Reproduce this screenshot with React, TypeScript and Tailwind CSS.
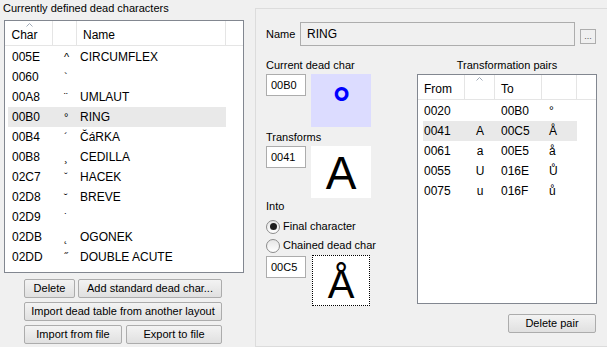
import type { ReactNode } from "react";

const deadChars = [
  { code: "005E", ch: "^", name: "CIRCUMFLEX" },
  { code: "0060", ch: "`", name: "" },
  { code: "00A8", ch: "¨", name: "UMLAUT" },
  { code: "00B0", ch: "°", name: "RING", selected: true },
  { code: "00B4", ch: "´", name: "ČáRKA" },
  { code: "00B8", ch: "¸", name: "CEDILLA" },
  { code: "02C7", ch: "ˇ", name: "HACEK" },
  { code: "02D8", ch: "˘", name: "BREVE" },
  { code: "02D9", ch: "˙", name: "" },
  { code: "02DB", ch: "˛", name: "OGONEK" },
  { code: "02DD", ch: "˝", name: "DOUBLE ACUTE" },
];

const pairs = [
  { from: "0020", fch: "", to: "00B0", tch: "°" },
  { from: "0041", fch: "A", to: "00C5", tch: "Å", selected: true },
  { from: "0061", fch: "a", to: "00E5", tch: "å" },
  { from: "0055", fch: "U", to: "016E", tch: "Ů" },
  { from: "0075", fch: "u", to: "016F", tch: "ů" },
];

function SortArrow({ className = "" }: { className?: string }) {
  return (
    <svg width="7" height="4" viewBox="0 0 7 4" className={`absolute top-[2px] ${className}`}>
      <path d="M0.5 3.5L3.5 0.5L6.5 3.5" fill="none" stroke="#a0aab8" strokeWidth="1" />
    </svg>
  );
}

function Btn({ children, className = "" }: { children: ReactNode; className?: string }) {
  return (
    <button
      className={`flex h-[19px] items-center justify-center rounded-[2px] border border-[#acacac] bg-gradient-to-b from-[#f3f3f3] to-[#e0e0e0] text-[11px] text-black ${className}`}
    >
      {children}
    </button>
  );
}

function CodeBox({ value }: { value: string }) {
  return (
    <div className="flex h-[22px] w-[40px] items-center border border-[#acacac] bg-white pl-[4px] text-[11px]">
      {value}
    </div>
  );
}

function Radio({ checked, label }: { checked?: boolean; label: string }) {
  return (
    <div className="flex h-[19px] items-center gap-[3px]">
      <div className="flex h-[14px] w-[14px] items-center justify-center rounded-full border border-[#8c8c8c] bg-gradient-to-b from-[#e6e6e6] to-[#ffffff]">
        {checked && <div className="h-[7px] w-[7px] rounded-full bg-[#1d1d1d]" />}
      </div>
      <span className="text-[11px]">{label}</span>
    </div>
  );
}

export default function App() {
  return (
    <div className="flex h-[347px] w-[607px] overflow-hidden bg-[#f0f0f0] font-['Liberation_Sans',Arial,sans-serif] text-black">
      {/* Left: dead character list */}
      <div className="flex w-[250px] flex-col">
        <div className="h-[18px] pl-[3px] pt-[1px] text-[11px] leading-[14px]">
          Currently defined dead characters
        </div>
        <div className="ml-[4px] mt-[2px] h-[253px] w-[240px] border border-[#828790] bg-white">
          <div className="flex h-[25px] border-b border-[#e5e5e5] text-[12px]">
            <div className="relative flex w-[48px] items-center justify-center border-r border-[#e5e5e5] pr-[8px]">
              <SortArrow className="left-[21px]" />
              <span className="pt-[4px]">Char</span>
            </div>
            <div className="w-[24px] border-r border-[#e5e5e5]" />
            <div className="flex w-[149px] items-center border-r border-[#e5e5e5] pl-[6px] pt-[4px]">Name</div>
          </div>
          <div className="mt-[1px] flex flex-col px-[3px]">
            {deadChars.map((r) => (
              <div
                key={r.code}
                className={`flex h-[20px] items-center text-[12px] ${r.selected ? "w-[218px] bg-[#e9e9e9]" : ""}`}
              >
                <span className="w-[45px] pl-[4px]">{r.code}</span>
                <span className="w-[27px] pl-[11px] text-[11px]">{r.ch}</span>
                <span>{r.name}</span>
              </div>
            ))}
          </div>
        </div>
        <div className="ml-[24px] mt-[6px] flex w-[198px] flex-col gap-[4px]">
          <div className="flex gap-[3px]">
            <Btn className="w-[51px]">Delete</Btn>
            <Btn className="flex-1">Add standard dead char...</Btn>
          </div>
          <Btn className="w-full">Import dead table from another layout</Btn>
          <div className="flex gap-[4px]">
            <Btn className="w-[98px]">Import from file</Btn>
            <Btn className="flex-1">Export to file</Btn>
          </div>
        </div>
      </div>

      {/* Right: selected dead character details */}
      <div className="ml-[5px] mt-[8px] h-[339px] w-[352px] border border-r-0 border-[#dcdcdc] pl-[10px] pt-[13px]">
        <div className="flex h-[24px] items-center">
          <span className="w-[34px] text-[11px]">Name</span>
          <div className="flex h-[24px] w-[275px] items-center border border-[#adadad] bg-[#f0f0f0] pl-[6px] text-[12px]">
            RING
          </div>
          <div className="ml-[5px] mt-[4px] flex h-[15px] w-[16px] items-end justify-center border border-[#adadad] bg-[#f0f0f0] pb-[2px] text-[9px] leading-none text-[#555]">
            ...
          </div>
        </div>

        <div className="flex">
          <div className="flex w-[151px] flex-col">
            <div className="mt-[12px] h-[16px] text-[11px] leading-[14px]">Current dead char</div>
            <div className="flex gap-[5px]">
              <CodeBox value="00B0" />
              <div className="flex h-[53px] w-[60px] items-start justify-center bg-[#dcdcff]">
                <span className="ml-[1px] mt-[7px] text-[44px] font-bold leading-none text-[#0000ff]">°</span>
              </div>
            </div>
            <div className="mt-[3px] h-[16px] text-[11px] leading-[14px]">Transforms</div>
            <div className="flex gap-[5px]">
              <CodeBox value="0041" />
              <div className="flex h-[52px] w-[60px] items-center justify-center bg-white">
                <span className="mt-[2px] text-[46px] leading-none">A</span>
              </div>
            </div>
            <div className="mt-[1px] h-[16px] text-[11px] leading-[14px]">Into</div>
            <div className="mt-[2px]">
              <Radio checked label="Final character" />
              <Radio label="Chained dead char" />
            </div>
            <div className="flex gap-[6px]">
              <div className="mt-[1px]">
                <CodeBox value="00C5" />
              </div>
              <div className="flex h-[51px] w-[58px] items-end justify-center border border-dotted border-black bg-white">
                <span className="mb-[1px] text-[40px] leading-[40px]">Å</span>
              </div>
            </div>
          </div>

          <div className="flex w-[180px] flex-col">
            <div className="mt-[12px] h-[16px] text-center text-[11px] leading-[14px]">Transformation pairs</div>
            <div className="h-[230px] w-[180px] border border-[#828790] bg-white">
              <div className="flex h-[25px] border-b border-[#e5e5e5] text-[12px]">
                <div className="flex w-[47px] items-center border-r border-[#e5e5e5] pl-[6px] pt-[4px]">From</div>
                <div className="relative flex w-[30px] justify-center border-r border-[#e5e5e5]">
                  <SortArrow />
                </div>
                <div className="flex w-[47px] items-center border-r border-[#e5e5e5] pl-[6px] pt-[4px]">To</div>
                <div className="w-[35px] border-r border-[#e5e5e5]" />
              </div>
              <div className="mt-[1px] flex flex-col px-[5px]">
                {pairs.map((p) => (
                  <div
                    key={p.from}
                    className={`flex h-[20px] items-center text-[12px] ${p.selected ? "w-[154px] bg-[#e9e9e9]" : ""}`}
                  >
                    <span className="w-[42px] pl-[1px]">{p.from}</span>
                    <span className="w-[30px] text-center">{p.fch}</span>
                    <span className="w-[47px] pl-[6px]">{p.to}</span>
                    <span className="pl-[7px]">{p.tch}</span>
                  </div>
                ))}
              </div>
            </div>
            <div className="mt-[10px] flex justify-end pr-[1px]">
              <Btn className="w-[88px]">Delete pair</Btn>
            </div>
          </div>
        </div>
      </div>
    </div>
  );
}
